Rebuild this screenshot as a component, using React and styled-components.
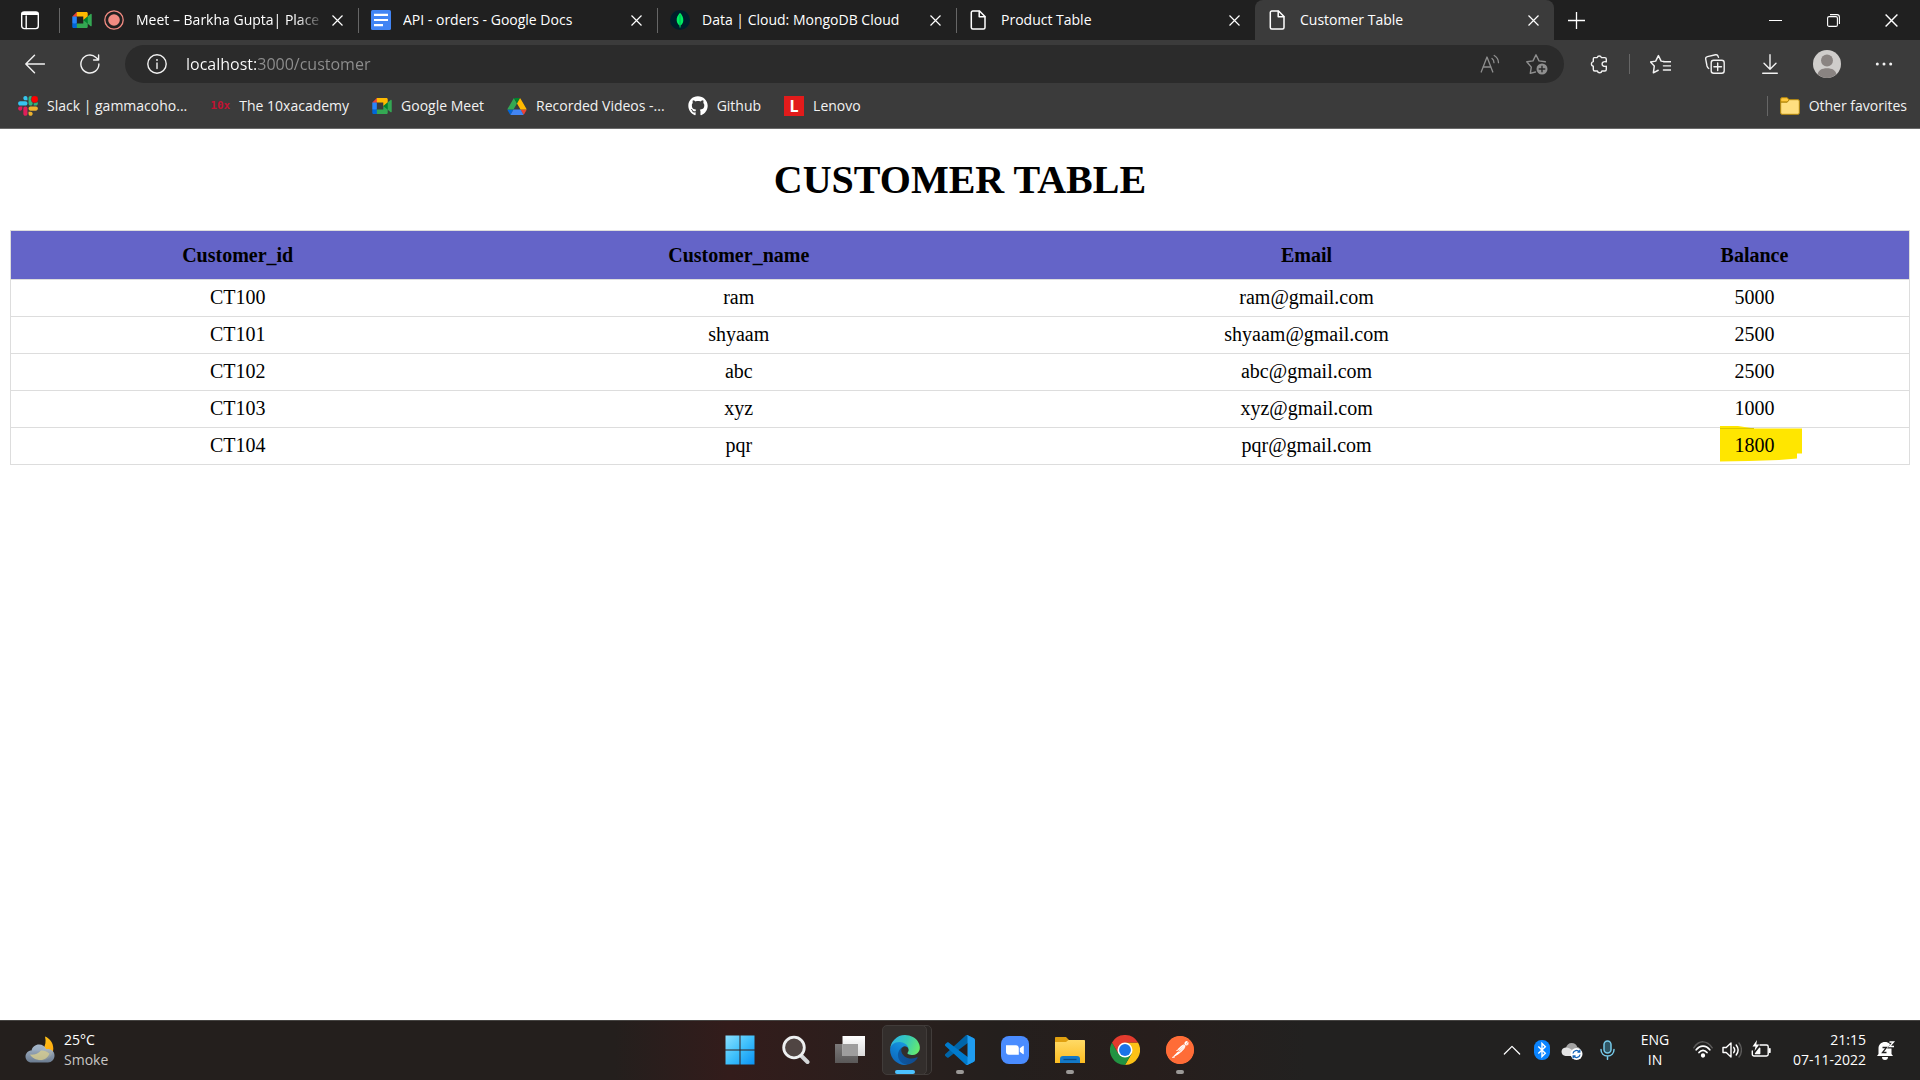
import React from "react";
import styled, { createGlobalStyle, css } from "styled-components";
import { FaGithub } from "react-icons/fa";
import { SiPostman } from "react-icons/si";

const ui = `"Segoe UI", "Open Sans", "Noto Sans", sans-serif`;

const GlobalStyle = createGlobalStyle`
  *, *::before, *::after { box-sizing: border-box; }
  body { margin: 0; background: #fff; font-family: ${ui}; }
  button { font: inherit; color: inherit; background: none; border: 0; padding: 0; cursor: default; }
  svg { display: block; flex: none; }
`;

const Shell = styled.div`
  display: flex;
  flex-direction: column;
  min-height: 100vh;
`;

/* ---------- browser chrome ---------- */

const TabBar = styled.div`
  display: flex;
  height: 40px;
  background: #202020;
  color: #fff;
`;

const ChromeButton = styled.button`
  display: flex;
  align-items: center;
  justify-content: center;
  flex: none;
  width: ${(p) => p.$width}px;
`;

const TabList = styled.div`
  display: flex;
  flex: 0 1 1495px;
  min-width: 0;
`;

const Tab = styled.div`
  position: relative;
  display: flex;
  align-items: center;
  gap: 12px;
  flex: 1 1 0;
  min-width: 0;
  padding: 0 11px 0 13px;
  font-size: 14px;
  line-height: 20px;
  ${(p) =>
    p.$active
      ? css`
          background: #3b3b3b;
          border-radius: 8px 8px 0 0;
        `
      : css`
          &::before {
            content: "";
            position: absolute;
            left: 0;
            top: 8px;
            bottom: 7px;
            width: 1px;
            background: #666;
          }
        `}
`;

const TabTitle = styled.span`
  flex: 1;
  min-width: 0;
  overflow: hidden;
  white-space: nowrap;
  ${(p) => p.$fade && css`mask-image: linear-gradient(90deg, #000 85%, transparent);`}
`;

const CloseTab = styled.button`
  display: grid;
  place-items: center;
  flex: none;
  width: 20px;
  height: 20px;
  margin-left: -10px;
`;

const WindowButtons = styled.div`
  display: flex;
  margin-left: auto;
`;

const Toolbar = styled.div`
  display: flex;
  align-items: center;
  gap: 15px;
  height: 47px;
  padding: 5px 16px 4px 15px;
  background: #3b3b3b;
  color: #f2f2f2;
`;

const ToolButton = styled.button`
  display: flex;
  align-items: center;
  justify-content: center;
  flex: none;
  width: ${(p) => (p.$wide ? 44 : 40)}px;
  height: 38px;
`;

const Divider = styled.span`
  flex: none;
  width: 1px;
  height: 20px;
  background: #666;
`;

const ToolDivider = styled(Divider)`
  margin: 0 -5px;
`;

const AddressBar = styled.label`
  display: flex;
  align-items: center;
  flex: 1;
  min-width: 0;
  height: 38px;
  padding: 0 7px 0 22px;
  gap: 19px;
  border-radius: 19px;
  background: #2b2b2b;
`;

const AddressInput = styled.input`
  flex: 1;
  min-width: 0;
  padding: 0;
  border: 0;
  outline: 0;
  font-family: ${ui};
  font-size: 16px;
  line-height: 24px;
  color: #9a9a9a;
  background: linear-gradient(90deg, #fff 70px, #8f8f8f 70px);
  -webkit-background-clip: text;
  background-clip: text;
  -webkit-text-fill-color: transparent;
`;

const AddressActions = styled.div`
  display: flex;
  gap: 7px;
  color: #8f8f8f;
`;

const Bookmarks = styled.nav`
  display: flex;
  align-items: center;
  gap: 23px;
  height: 42px;
  padding: 0 13px 3px 18px;
  border-bottom: 1px solid #6a6a6a;
  background: #3b3b3b;
  color: #f2f2f2;
`;

const Bookmark = styled.a`
  display: flex;
  align-items: center;
  gap: 9px;
  color: inherit;
  text-decoration: none;
  font-size: 14px;
  line-height: 20px;
  white-space: nowrap;
`;

const OtherFavorites = styled.div`
  display: flex;
  align-items: center;
  gap: 12px;
  margin-left: auto;
`;

const LetterIcon = styled.span`
  display: grid;
  place-items: center;
  width: 20px;
  height: 20px;
  font-family: ${(p) => (p.$slab ? `"DejaVu Sans Mono"` : `"Open Sans"`)}, sans-serif;
  font-weight: 700;
  font-size: ${(p) => (p.$slab ? 11 : 16)}px;
  line-height: 20px;
  color: ${(p) => (p.$slab ? "#c01232" : "#fff")};
  background: ${(p) => (p.$slab ? "transparent" : "#e21b1b")};
`;

/* ---------- page ---------- */

const Page = styled.main`
  flex: 1;
  padding: 28px 10px;
  background: #fff;
  color: #000;
  font-family: "Times New Roman", "Liberation Serif", serif;
  font-size: 20px;
`;

const Title = styled.h1`
  margin: 0 0 27px;
  font-size: 40px;
  line-height: 46px;
  text-align: center;
`;

const Table = styled.table`
  width: 100%;
  border: 1px solid #ddd;
  border-collapse: collapse;
  line-height: 24px;
  text-align: center;
`;

const Column = styled.col`
  width: ${(p) => p.$share}%;
`;

const HeadRow = styled.tr`
  background: #6464c8;
`;

const Row = styled.tr`
  border-top: 1px solid #ddd;
`;

const HeadCell = styled.th`
  padding: 12px 20px;
`;

const Cell = styled.td`
  padding: 5px 20px 7px;
`;

const Marked = styled.span`
  position: relative;
  isolation: isolate;
`;

const Marker = styled.svg`
  position: absolute;
  z-index: -1;
  left: -14px;
  top: -8px;
`;

/* ---------- taskbar ---------- */

const Taskbar = styled.footer`
  display: grid;
  grid-template-columns: 1fr auto 1fr;
  height: 60px;
  padding-bottom: 2px;
  border-top: 1px solid #454341;
  background: linear-gradient(90deg, #241f1d 0, #241f1d 32%, #331c1b 38%, #2a1f1d 46%, #241f1d 52%, #271e1c 60%, #222120 68%, #222120 100%);
  color: #fff;
  font-size: 14px;
  line-height: 20px;
`;

const Weather = styled.button`
  display: flex;
  align-items: center;
  justify-self: start;
  gap: 9px;
  padding-left: 25px;
  text-align: left;
`;

const Lines = styled.span`
  display: flex;
  flex-direction: column;
  text-align: ${(p) => p.$align || "left"};
`;

const Muted = styled.span`
  color: #c8c6c5;
`;

const Apps = styled.div`
  display: flex;
`;

const AppButton = styled.button`
  position: relative;
  display: flex;
  align-items: center;
  justify-content: center;
  width: 55px;
  ${(p) =>
    p.$running &&
    css`
      &::after {
        content: "";
        position: absolute;
        left: 50%;
        bottom: 4px;
        width: 8px;
        height: 4px;
        margin-left: -4px;
        border-radius: 2px;
        background: #9b9997;
      }
    `}
  ${(p) =>
    p.$current &&
    css`
      &::after {
        width: 20px;
        margin-left: -10px;
        background: #4cc2ff;
      }
    `}
`;

const Plate = styled.span`
  position: absolute;
  inset: 4px 2px 3px ${(p) => (p.$back ? 12 : 4)}px;
  right: ${(p) => (p.$back ? 1 : 6)}px;
  border: 1px solid #413c3a;
  border-radius: 5px;
  background: ${(p) => (p.$back ? "#2a2523" : "#332e2c")};
`;

const Above = styled.span`
  position: relative;
`;

const Tray = styled.div`
  display: flex;
  justify-self: end;
  padding-right: 24px;
`;

const TrayButton = styled.button`
  display: flex;
  align-items: center;
  justify-content: center;
  gap: 9px;
  width: ${(p) => p.$width}px;
`;

const Clock = styled.button`
  display: flex;
  align-items: center;
  justify-content: flex-end;
  gap: 10px;
  width: 115px;
`;

/* ---------- icons ---------- */

const Line = ({ size = 20, w = 1.4, children, ...rest }) => (
  <svg width={size} height={size} viewBox="0 0 20 20" fill="none" stroke="currentColor" strokeWidth={w} strokeLinecap="round" strokeLinejoin="round" aria-hidden="true" {...rest}>
    {children}
  </svg>
);

const WorkspaceIcon = () => (
  <Line>
    <rect x="1.700" y="2" width="16.600" height="16.600" rx="2.500" />
    <path d="M2 4.400h16M6.200 6v12.500" />
    <path d="M3 3.600h14" strokeWidth="3" />
  </Line>
);
const CrossIcon = ({ size = 11 }) => (
  <svg width={size} height={size} viewBox="0 0 11 11" stroke="currentColor" strokeWidth="1.200" aria-hidden="true"><path d="M.5 .5l10 10M10.500 .5l-10 10" /></svg>
);
const MeetIcon = () => (
  <svg width="20" height="16" viewBox="0 0 87.5 72" aria-hidden="true">
    <path fill="#00832d" d="M49.500 36l8.530 9.750 11.470 7.330 2-17.020-2-16.640-11.690 6.440z" />
    <path fill="#0066da" d="M0 51.500V66c0 3.315 2.685 6 6 6h14.500l3-10.960-3-9.540-9.950-3z" />
    <path fill="#e94235" d="M20.500 0L0 20.500l10.550 3 9.950-3 2.950-9.410z" />
    <path fill="#2684fc" d="M20.500 20.500H0v31h20.500z" />
    <path fill="#34a853" d="M82.600 8.680L69.500 19.420v33.660l13.160 10.790c1.970 1.540 4.850.135 4.850-2.370V11c0-2.535-2.945-3.925-4.910-2.320zM49.500 36v15.500h-29V72h43c3.315 0 6-2.685 6-6V53.080z" />
    <path fill="#ffba00" d="M63.500 0h-43v20.500h29V36l20-16.570V6c0-3.315-2.685-6-6-6z" />
  </svg>
);
const RecordIcon = () => (
  <svg width="20" height="20" viewBox="0 0 20 20" aria-hidden="true">
    <circle cx="10" cy="10" r="9.200" fill="none" stroke="#f28b82" strokeWidth="1.300" />
    <circle cx="10" cy="10" r="5.800" fill="#f28b82" />
  </svg>
);
const DocsIcon = () => (
  <svg width="20" height="20" viewBox="0 0 20 20" aria-hidden="true">
    <rect width="20" height="20" rx="1.500" fill="#4285f4" />
    <path d="M3 4.800h14M3 10h14M3 15.200h9" stroke="#fff" strokeWidth="2.200" />
  </svg>
);
const MongoIcon = () => (
  <svg width="20" height="20" viewBox="0 0 20 20" aria-hidden="true">
    <circle cx="10" cy="10" r="10" fill="#001e2b" />
    <path d="M10 2.800C7.600 5.400 6.500 7.800 6.700 10.500c.2 2.400 1.500 4 2.900 5.100l.2 1.900h.5l.2-1.900c1.500-1.200 2.700-2.800 2.800-5.200C13.500 7.700 12.300 5.300 10 2.800z" fill="#00ed64" />
    <path d="M10 5v12.500" stroke="#00a548" strokeWidth=".7" />
  </svg>
);
const PageIcon = () => (
  <Line w="1.500">
    <path d="M3.800 1h6.700L16 6.500v11c0 .9-.6 1.500-1.500 1.500H3.800c-.9 0-1.500-.6-1.500-1.500v-15C2.300 1.600 2.900 1 3.800 1z" />
    <path d="M10.200 1.200v5.500h5.600" />
  </Line>
);
const BackIcon = () => <Line><path d="M.8 10h18.700M9.500 1.200L.8 10l8.700 8.800" /></Line>;
const ReloadIcon = () => <Line><path d="M18.900 10A9 9 0 1 1 16 3.400l2.300 2.200M18.600 1v5h-5" /></Line>;
const InfoIcon = () => (
  <Line color="#f2f2f2"><circle cx="10" cy="10" r="9.200" /><path d="M10 9v5.500" /><path d="M10 5.900v.2" strokeWidth="1.800" /></Line>
);
const ReadIcon = () => (
  <Line w="1.300"><path d="M1.200 18L7 3l5.800 15M3 13h8M12 4.500c1.300 1 2 2.500 2 4.200M14.200 1.500c2.500 1.500 4.200 4.200 4.300 7.200" /></Line>
);
const AddStarIcon = () => (
  <Line size={22} viewBox="0 0 22 22" w="1.400">
    <path d="M9.500 19l-5.200 1.400 1-6.300L.8 8.800l6.200-.9L10 1.800l3 6.100 6.300.9" />
    <circle cx="16" cy="16" r="5.500" fill="currentColor" stroke="none" />
    <path d="M16 13.200v5.600M13.200 16h5.600" stroke="#2b2b2b" />
  </Line>
);
const PuzzleIcon = () => (
  <Line><path d="M5.200 3.600h3a2.200 2.200 0 0 1 4.200 0h3.400c.9 0 1.500.6 1.500 1.500v2.800c-3-.8-4.200.6-4.200 2.100s1.200 2.900 4.200 2.100v3.400c0 .9-.6 1.500-1.500 1.500h-2.900a2.300 2.300 0 0 1-4.500 0H5.800c-.9 0-1.500-.6-1.500-1.500v-3.200a2.400 2.400 0 0 1 0-4.700V5.100c0-.9.4-1.500.9-1.500z" /></Line>
);
const FavoritesIcon = () => (
  <Line size={21}><path d="M13.300 7.200l-2.700-.4L8 1.500 5.400 6.800l-5 .8 3.700 3.800-.9 6.500 4.600-2.400M12.800 7.300H20M12.800 11.300H20M12.800 15.300H20" /></Line>
);
const CollectionsIcon = () => (
  <Line><rect x="6.200" y="6.300" width="13" height="13" rx="2.500" /><path d="M12.700 9v7.600M8.900 12.800h7.600M3.700 14.500C2.800 14 2.300 13 2 12L.7 5.200C.4 3.900 1.100 3 2.400 2.600L10.500.8c1.300-.3 2.300.4 2.700 1.700l.3.900" /></Line>
);
const DownloadIcon = () => <Line><path d="M10 .8v14M4 9.200l6 6 6-6M2.700 19.300h14.600" /></Line>;
const Avatar = () => (
  <svg width="28" height="28" viewBox="0 0 28 28" aria-hidden="true">
    <circle cx="14" cy="14" r="14" fill="#cfcdcb" /><circle cx="14" cy="10.500" r="6" fill="#8a8482" />
    <path d="M4.600 24.300C5.200 20.300 8.800 18.200 14 18.200s8.800 2.100 9.400 6.100A14 14 0 0 1 4.600 24.300z" fill="#8a8482" />
  </svg>
);
const DotsIcon = () => <svg width="18" height="4" viewBox="0 0 18 4" fill="currentColor" aria-hidden="true"><circle cx="2.300" cy="2" r="1.500" /><circle cx="9" cy="2" r="1.500" /><circle cx="15.700" cy="2" r="1.500" /></svg>;
const PlusIcon = () => <svg width="17" height="17" viewBox="0 0 17 17" stroke="currentColor" strokeWidth="1.300" aria-hidden="true"><path d="M8.500 0v17M0 8.500h17" /></svg>;
const MinimizeIcon = () => <svg width="13" height="13" viewBox="0 0 13 13" stroke="currentColor" aria-hidden="true"><path d="M0 6.500h13" /></svg>;
const RestoreIcon = () => <svg width="13" height="13" viewBox="0 0 13 13" fill="none" stroke="currentColor" strokeWidth="1.100" aria-hidden="true"><rect x=".6" y="2.600" width="9.800" height="9.800" rx="1.500" /><path d="M3 .6h7c1.400 0 2.400 1 2.400 2.400v7" /></svg>;

const SlackIcon = () => (
  <svg width="20" height="20" viewBox="0 0 127 127" aria-hidden="true">
    <path fill="#e01e5a" d="M27.200 80c0 7.300-5.900 13.200-13.200 13.200C6.700 93.200.8 87.300.8 80c0-7.300 5.900-13.200 13.200-13.200h13.200V80zm6.600 0c0-7.300 5.900-13.200 13.200-13.200 7.300 0 13.200 5.900 13.200 13.200v33c0 7.300-5.900 13.200-13.200 13.200-7.300 0-13.200-5.900-13.200-13.200V80z" />
    <path fill="#36c5f0" d="M47 27c-7.300 0-13.200-5.900-13.200-13.200C33.800 6.500 39.700.6 47 .6c7.300 0 13.200 5.900 13.200 13.200V27H47zm0 6.700c7.300 0 13.200 5.900 13.200 13.200 0 7.300-5.900 13.200-13.200 13.200H13.900C6.600 60.100.7 54.200.7 46.900c0-7.300 5.900-13.200 13.200-13.200H47z" />
    <path fill="#2eb67d" d="M99.900 46.900c0-7.300 5.900-13.200 13.200-13.200 7.300 0 13.200 5.900 13.200 13.200 0 7.300-5.900 13.200-13.200 13.200H99.900V46.900zm-6.600 0c0 7.300-5.900 13.200-13.200 13.200-7.300 0-13.200-5.900-13.200-13.200V13.800C66.900 6.500 72.800.6 80.100.6c7.300 0 13.200 5.900 13.200 13.200v33.100z" />
    <path fill="#ecb22e" d="M80.100 99.800c7.300 0 13.200 5.900 13.200 13.200 0 7.300-5.900 13.200-13.200 13.200-7.300 0-13.200-5.900-13.200-13.200V99.800h13.200zm0-6.600c-7.300 0-13.200-5.900-13.200-13.200 0-7.300 5.900-13.200 13.200-13.200h33.100c7.300 0 13.200 5.900 13.200 13.200 0 7.300-5.900 13.200-13.200 13.200H80.100z" />
    <circle cx="106" cy="21" r="23" fill="#f00" stroke="#3b3b3b" strokeWidth="3" />
  </svg>
);
const DriveIcon = () => (
  <svg width="20" height="17" viewBox="0 0 87.3 78" aria-hidden="true">
    <path fill="#0066da" d="M6.600 66.850l3.850 6.650c.8 1.400 1.950 2.500 3.300 3.300L27.500 53H0c0 1.550.4 3.100 1.200 4.500z" />
    <path fill="#34a853" d="M43.650 25L29.900 1.200c-1.350.8-2.500 1.900-3.300 3.300l-25.400 44A9.060 9.060 0 0 0 0 53h27.500z" />
    <path fill="#ea4335" d="M73.550 76.800c1.350-.8 2.500-1.900 3.300-3.300l1.600-2.750 7.650-13.250c.8-1.400 1.200-2.950 1.200-4.500H59.798l5.852 11.500z" />
    <path fill="#00832d" d="M43.650 25L57.400 1.200C56.050.4 54.500 0 52.900 0H34.400c-1.600 0-3.150.45-4.500 1.200z" />
    <path fill="#4285f4" d="M59.800 53H27.500L13.750 76.800c1.350.8 2.900 1.200 4.500 1.200h50.800c1.600 0 3.150-.45 4.500-1.200z" />
    <path fill="#ffba00" d="M73.400 26.500l-12.700-22c-.8-1.400-1.950-2.500-3.300-3.300L43.650 25 59.800 53h27.450c0-1.550-.4-3.100-1.200-4.500z" />
  </svg>
);
const FolderIcon = () => (
  <svg width="20" height="18" viewBox="0 0 20 18" aria-hidden="true">
    <path d="M.7 3V2C.7 1.200 1.200.7 2 .7h5.200L9 2.700 7.500 5H.7z" fill="#ffc83d" stroke="#b98a0a" />
    <path d="M.7 5.200h6.500L9.300 2.700H18c.8 0 1.300.5 1.300 1.300v12c0 .8-.5 1.300-1.300 1.300H2c-.8 0-1.300-.5-1.300-1.300z" fill="#ffdf80" stroke="#b98a0a" />
  </svg>
);

const WeatherIcon = () => (
  <svg width="30" height="28" viewBox="0 0 30 28" aria-hidden="true">
    <defs>
      <linearGradient id="cloud" x1="0" y1="0" x2="0" y2="1"><stop offset="0" stopColor="#b4c6da" /><stop offset="1" stopColor="#718399" /></linearGradient>
      <linearGradient id="moon" x1="0" y1="0" x2="1" y2="1"><stop offset="0" stopColor="#ffd21f" /><stop offset="1" stopColor="#ff9f0a" /></linearGradient>
    </defs>
    <path d="M20 .5c5 2 8.300 6.500 8.300 12 0 7-5 12-12 12-5 0-9-2.700-11-6.500 10 2 17.500-7 14.700-17.500z" fill="url(#moon)" />
    <path d="M6.500 14.500C7.300 11 10.300 8.500 14 8.500c3.300 0 6 2 7.200 4.700 4.700-.6 8.300 2.300 8.300 6.300 0 4-3 7-6.500 7H6.500C3 26.500.5 23.800.5 20.500s2.700-6 6-6z" fill="url(#cloud)" fillOpacity=".93" />
    <path d="M5 18.500c3 .8 7.800 0 11.200-4.500 2 .3 5.300 1 8.300 3.500-1.500 4-4.700 6.500-9 6.500-4.300 0-8.700-2.200-10.500-5.500z" fill="#d8ce8e" fillOpacity=".75" />
    <path d="M7 14.600c.3-2.800 3.200-5 6.500-5 4 0 6.500 2.300 7.500 5.400" fill="#9db1c8" fillOpacity=".5" />
  </svg>
);
const StartIcon = () => (
  <svg width="30" height="30" viewBox="0 0 30 30" aria-hidden="true">
    <defs><linearGradient id="win" x1="0" y1="0" x2="1" y2="1"><stop offset="0" stopColor="#8be0ff" /><stop offset=".5" stopColor="#3fc0fb" /><stop offset="1" stopColor="#0a93f5" /></linearGradient></defs>
    <path d="M.5 .5h14v14h-14zM15.500 .5h14v14h-14zM.5 15.500h14v14h-14zM15.500 15.500h14v14h-14z" fill="url(#win)" />
  </svg>
);
const SearchIcon = () => (
  <svg width="30" height="30" viewBox="0 0 30 30" aria-hidden="true">
    <path d="M20.500 20l7 7" stroke="#d4d6d8" strokeWidth="4" strokeLinecap="round" />
    <circle cx="14" cy="12.500" r="10.300" fill="#504543" stroke="#eef0f1" strokeWidth="2.800" />
  </svg>
);
const TaskViewIcon = () => (
  <svg width="30" height="30" viewBox="0 0 30 30" aria-hidden="true">
    <defs>
      <linearGradient id="tvA" x1="0" y1="0" x2="0" y2="1"><stop offset="0" stopColor="#fff" /><stop offset="1" stopColor="#d9d9d9" /></linearGradient>
      <linearGradient id="tvB" x1="0" y1="0" x2="0" y2="1"><stop offset="0" stopColor="#7b7979" /><stop offset="1" stopColor="#5a5858" /></linearGradient>
    </defs>
    <path d="M0 9h23v19H0z" fill="url(#tvB)" /><path d="M7.500 1H30v20H7.500z" fill="url(#tvA)" /><path d="M7.500 9H23v12H7.500z" fill="#9e9d9d" />
  </svg>
);
const EdgeIcon = () => (
  <svg width="30" height="30" viewBox="4 4 258 258" aria-hidden="true">
    <defs>
      <linearGradient id="eA" x1="0" y1=".6" x2="1" y2=".6"><stop offset="0" stopColor="#0c59a4" /><stop offset="1" stopColor="#114a8b" /></linearGradient>
      <linearGradient id="eB" x1=".8" y1="0" x2=".3" y2="1"><stop offset="0" stopColor="#1b9de2" /><stop offset=".5" stopColor="#0f7fd2" /><stop offset="1" stopColor="#1066b8" /></linearGradient>
      <linearGradient id="eC" x1="0" y1=".3" x2="1" y2=".6"><stop offset="0" stopColor="#2bb3e8" /><stop offset=".5" stopColor="#36c9b8" /><stop offset="1" stopColor="#66eb6e" /></linearGradient>
    </defs>
    <path fill="url(#eA)" d="M235.680 195.460a93.730 93.730 0 0 1-10.540 4.710 101.870 101.870 0 0 1-35.900 6.460c-47.320 0-88.540-32.550-88.540-74.320A31.480 31.480 0 0 1 117.130 105c-42.800 1.800-53.800 46.400-53.800 72.530 0 73.880 68.090 81.370 82.760 81.370 7.910 0 19.840-2.300 27-4.560l1.310-.44a128.340 128.340 0 0 0 66.600-52.800 4 4 0 0 0-5.320-5.640z" />
    <path fill="url(#eB)" d="M110.340 246.340A79.200 79.200 0 0 1 87.600 225a80.720 80.720 0 0 1 29.530-120c3.120-1.470 8.450-4.130 15.540-4a32.350 32.350 0 0 1 25.690 13 31.880 31.880 0 0 1 6.360 18.660c0-.21 24.460-79.600-80-79.600-43.900 0-80 41.660-80 78.210a130.150 130.150 0 0 0 12.110 56 128 128 0 0 0 156.380 67.110 75.550 75.550 0 0 1-62.780-8z" />
    <path fill="url(#eC)" d="M156.940 153.780c-.81 1.050-3.300 2.500-3.300 5.660 0 2.610 1.700 5.120 4.720 7.230 14.380 10 41.490 8.680 41.560 8.680a59.560 59.560 0 0 0 30.270-8.350 61.380 61.380 0 0 0 30.430-52.880c.26-22.410-8-37.310-11.340-43.910C228.090 28.760 182.350 5 132.610 5a128 128 0 0 0-128 126.200c.48-36.540 36.800-66.050 80-66.050 3.500 0 23.460.34 42 10.070 16.340 8.580 24.900 18.940 30.850 29.210 6.180 10.670 7.280 24.150 7.280 29.520s-2.740 13.330-7.800 19.830z" />
  </svg>
);
const CodeIcon = () => (
  <svg width="30" height="30" viewBox="0 0 100 100" aria-hidden="true">
    <path fill="#0065a9" d="M96.461 10.796L75.857.876C73.472-.273 70.622.212 68.750 2.083L1.299 63.583c-1.815 1.654-1.813 4.511.004 6.162l5.510 5.009c1.485 1.350 3.722 1.450 5.321.237L93.361 13.370C96.086 11.303 100 13.246 100 16.667v-.239c0-2.401-1.375-4.590-3.539-5.632z" />
    <path fill="#007acc" d="M96.461 89.204l-20.604 9.921c-2.385 1.148-5.235.664-7.107-1.208L1.299 36.417c-1.815-1.654-1.813-4.511.004-6.162l5.510-5.009c1.485-1.350 3.722-1.450 5.321-.237L93.361 86.630C96.086 88.697 100 86.754 100 83.333v.240c0 2.400-1.375 4.589-3.539 5.631z" />
    <path fill="#1f9cf0" d="M75.858 99.126c-2.386 1.148-5.236.663-7.108-1.209C71.056 100.223 75 98.590 75 95.328V4.672C75 1.410 71.056-.223 68.750 2.083 70.622.211 73.472-.274 75.858.874l20.601 9.907C98.623 11.822 100 14.011 100 16.413v67.174c0 2.402-1.377 4.592-3.541 5.633z" />
  </svg>
);
const ZoomIcon = () => (
  <svg width="28" height="28" viewBox="0 0 28 28" aria-hidden="true">
    <rect width="28" height="28" rx="8" fill="#4a8cff" />
    <path d="M5 9.300h10c1.600 0 2.800 1.200 2.800 2.800v6.600h-10C6.200 18.700 5 17.500 5 15.900zM18.800 12.300l3-2.200c.6-.4 1-.3 1 .4v7c0 .7-.4.8-1 .4l-3-2.200z" fill="#fff" />
  </svg>
);
const ExplorerIcon = () => (
  <svg width="30" height="28" viewBox="0 0 30 28" aria-hidden="true">
    <defs><linearGradient id="fo" x1="0" y1="0" x2="0" y2="1"><stop offset="0" stopColor="#ffda66" /><stop offset="1" stopColor="#fcbc21" /></linearGradient></defs>
    <path d="M0 8V2C0 1.400.5 1 1 1h10l3 3v4z" fill="#e0a010" />
    <path d="M0 6h11l2.500-2H29c.6 0 1 .4 1 1v22H0z" fill="url(#fo)" />
    <path d="M5 27v-4c0-2 1-3 3-3h14c2 0 3 1 3 3v4z" fill="#1379c8" /><path d="M8.500 23.500h13" stroke="#0a4b85" strokeWidth="1.300" />
  </svg>
);
const ChromeIcon = () => (
  <svg width="30" height="30" viewBox="0 0 48 48" aria-hidden="true">
    <path d="M24 12h20.800A24 24 0 0 1 24 48l10.400-18z" fill="#fbc116" />
    <path d="M3.200 12A24 24 0 0 0 24 48l10.400-18L24 24l-10.400 6z" fill="#229342" />
    <path d="M3.200 12l10.400 18L24 12H44.800A24 24 0 0 0 3.200 12z" fill="#e33b2e" />
    <circle cx="24" cy="24" r="12" fill="#fff" /><circle cx="24" cy="24" r="9.500" fill="#1a73e8" />
  </svg>
);
const PostmanBadge = styled(SiPostman)`
  width: 28px;
  height: 28px;
  border-radius: 50%;
  color: #ff6c37;
  background: radial-gradient(circle, #fff 60%, #ff6c37 62%);
`;

const ChevronIcon = () => <Line size={18}><path d="M1.500 14.500L10 6l8.500 8.500" /></Line>;
const BluetoothIcon = () => (
  <svg width="16" height="20" viewBox="0 0 16 20" aria-hidden="true">
    <rect width="16" height="20" rx="7.500" fill="#0a84ff" />
    <path d="M4.300 6.500l7 6.800L8 16.500v-13l3.300 3.200-7 6.800" fill="none" stroke="#fff" strokeWidth="1.400" />
  </svg>
);
const CloudSyncIcon = () => (
  <svg width="22" height="20" viewBox="0 0 22 20" aria-hidden="true">
    <path d="M5 8c.4-3 2.800-5 5.700-5C13.300 3 15.500 4.500 16.300 7c2 .5 3.500 2 3.500 4.500L16 16H5z" fill="#a3a3a3" />
    <path d="M4.500 7.500c2-.3 4.500.5 6.500 2.500l5 6H4.500C2.300 16 .5 14 .5 11.800.5 9.500 2.200 7.700 4.500 7.500z" fill="#e4e4e4" />
    <circle cx="15.500" cy="14" r="6" fill="#fff" />
    <path d="M12 13.500a3.600 3.600 0 0 1 6.400-1.700M19 14.500a3.600 3.600 0 0 1-6.400 1.700M18.800 9.800v2.400h-2.400M12.200 18.200v-2.400h2.400" fill="none" stroke="#1565b8" strokeWidth="1.300" />
  </svg>
);
const MicIcon = () => (
  <svg width="15" height="20" viewBox="0 0 15 20" fill="none" stroke="#76c9e8" strokeWidth="1.500" strokeLinecap="round" aria-hidden="true">
    <rect x="4" y="1" width="7" height="12" rx="3.500" fill="#2f5563" /><path d="M1 9.500c0 4 2.700 6.500 6.500 6.500S14 13.500 14 9.500M7.500 16v3.300" />
  </svg>
);
const WifiIcon = () => (
  <Line w="1.700"><path d="M.8 7.800C6-.2 14 0 19.200 7.800" stroke="#5c5b5a" strokeWidth="1.500" /><path d="M3.200 9.800c3.800-5 9.800-5 13.600 0M6 12.600c2.300-3 5.700-3 8 0" /><circle cx="10" cy="15.500" r="1.300" fill="currentColor" /></Line>
);
const VolumeIcon = () => (
  <Line><path d="M1 7.500h3.200L9 3v14l-4.800-4.500H1z" /><path d="M11.700 7.300c1.200 1.600 1.200 3.800 0 5.400M14.200 5c2.300 3 2.300 7 0 10" /><path d="M17 3c3.200 4 3.200 10 0 14" stroke="#5c5b5a" /></Line>
);
const BatteryIcon = () => (
  <Line><path d="M9 5h6.500c1 0 1.700.7 1.700 1.700v7.600c0 1-.7 1.700-1.700 1.700H3c-1 0-1.700-.7-1.700-1.700V11" /><path d="M18.800 8.800v3.400" strokeWidth="1.800" /><path d="M4.500 13.500h4.200V8.200L5 13z" fill="currentColor" /><path d="M6 0L1.500 6.500h3L3.500 11 8.300 4.500h-3z" fill="currentColor" stroke="none" /></Line>
);
const BellIcon = () => (
  <svg width="20" height="20" viewBox="0 0 20 20" aria-hidden="true">
    <path d="M2.500 14V8.500C2.500 4.500 5.300 2 9 2s6.500 2.500 6.500 6.500V14l1.500 2H1zM6 17h6a3 3 0 0 1-6 0z" fill="#fff" />
    <path d="M6.500 7.500h4l-4 5h4" fill="none" stroke="#222" strokeWidth="1.300" />
    <path d="M13 1.500h5l-4 5.500h5" fill="none" stroke="#222" strokeWidth="3" />
    <path d="M13.500 2h4l-4 4.500h4.500" fill="none" stroke="#fff" strokeWidth="1.400" />
  </svg>
);

/* ---------- data ---------- */

const tabs = [
  { title: "Meet – Barkha Gupta| Place", icons: [MeetIcon, RecordIcon], fade: true },
  { title: "API - orders - Google Docs", icons: [DocsIcon] },
  { title: "Data | Cloud: MongoDB Cloud", icons: [MongoIcon] },
  { title: "Product Table", icons: [PageIcon] },
  { title: "Customer Table", icons: [PageIcon], active: true },
];

const bookmarks = [
  ["Slack | gammacoho...", <SlackIcon />],
  ["The 10xacademy", <LetterIcon $slab>10x</LetterIcon>],
  ["Google Meet", <MeetIcon />],
  ["Recorded Videos -...", <DriveIcon />],
  ["Github", <FaGithub size={20} color="#fff" />],
  ["Lenovo", <LetterIcon>L</LetterIcon>],
];

const columns = [
  { name: "Customer_id", share: 23.9 },
  { name: "Customer_name", share: 28.9 },
  { name: "Email", share: 30.9 },
  { name: "Balance", share: 16.3 },
];
const customers = [
  ["CT100", "ram", "ram@gmail.com", 5000],
  ["CT101", "shyaam", "shyaam@gmail.com", 2500],
  ["CT102", "abc", "abc@gmail.com", 2500],
  ["CT103", "xyz", "xyz@gmail.com", 1000],
  ["CT104", "pqr", "pqr@gmail.com", 1800],
];

const apps = [
  { name: "Start", icon: <StartIcon /> },
  { name: "Search", icon: <SearchIcon /> },
  { name: "Task View", icon: <TaskViewIcon /> },
  { name: "Microsoft Edge", icon: <EdgeIcon />, running: true, current: true },
  { name: "Visual Studio Code", icon: <CodeIcon />, running: true },
  { name: "Zoom", icon: <ZoomIcon /> },
  { name: "File Explorer", icon: <ExplorerIcon />, running: true },
  { name: "Google Chrome", icon: <ChromeIcon /> },
  { name: "Postman", icon: <PostmanBadge />, running: true },
];

function Highlight({ children }) {
  return (
    <Marked>
      <Marker width="82" height="36" viewBox="0 0 82 36" aria-hidden="true">
        <path d="M0 0h18l16 2.500h48v25h-5v5l-18 1.500-30 1L0 35.500z" fill="#ffe600" />
        <path d="M0 2.500h34" stroke="#dcc700" />
      </Marker>
      {children}
    </Marked>
  );
}

export default function App() {
  return (
    <Shell>
      <GlobalStyle />
      <header>
        <TabBar>
          <ChromeButton $width={59} aria-label="Tab actions"><WorkspaceIcon /></ChromeButton>
          <TabList>
            {tabs.map(({ title, icons, active, fade }) => (
              <Tab key={title} $active={active}>
                {icons.map((Icon, i) => <Icon key={i} />)}
                <TabTitle $fade={fade}>{title}</TabTitle>
                <CloseTab aria-label={`Close ${title}`}><CrossIcon /></CloseTab>
              </Tab>
            ))}
          </TabList>
          <ChromeButton $width={44} aria-label="New tab"><PlusIcon /></ChromeButton>
          <WindowButtons>
            <ChromeButton $width={58} aria-label="Minimize"><MinimizeIcon /></ChromeButton>
            <ChromeButton $width={58} aria-label="Restore"><RestoreIcon /></ChromeButton>
            <ChromeButton $width={58} aria-label="Close window"><CrossIcon size={13} /></ChromeButton>
          </WindowButtons>
        </TabBar>
        <Toolbar>
          <ToolButton aria-label="Back"><BackIcon /></ToolButton>
          <ToolButton aria-label="Refresh"><ReloadIcon /></ToolButton>
          <AddressBar>
            <InfoIcon />
            <AddressInput type="text" aria-label="Address" defaultValue="localhost:3000/customer" spellCheck={false} />
            <AddressActions>
              <ToolButton aria-label="Read aloud"><ReadIcon /></ToolButton>
              <ToolButton aria-label="Add to favorites"><AddStarIcon /></ToolButton>
            </AddressActions>
          </AddressBar>
          <ToolButton aria-label="Extensions"><PuzzleIcon /></ToolButton>
          <ToolDivider />
          <ToolButton aria-label="Favorites"><FavoritesIcon /></ToolButton>
          <ToolButton aria-label="Collections"><CollectionsIcon /></ToolButton>
          <ToolButton aria-label="Downloads"><DownloadIcon /></ToolButton>
          <ToolButton $wide aria-label="Profile"><Avatar /></ToolButton>
          <ToolButton aria-label="Settings and more"><DotsIcon /></ToolButton>
        </Toolbar>
        <Bookmarks>
          {bookmarks.map(([name, icon]) => (
            <Bookmark key={name} href="#">{icon}<span>{name}</span></Bookmark>
          ))}
          <OtherFavorites>
            <Divider />
            <Bookmark href="#"><FolderIcon /><span>Other favorites</span></Bookmark>
          </OtherFavorites>
        </Bookmarks>
      </header>

      <Page>
        <Title>CUSTOMER TABLE</Title>
        <Table>
          <colgroup>
            {columns.map(({ name, share }) => <Column key={name} $share={share} />)}
          </colgroup>
          <thead>
            <HeadRow>{columns.map(({ name }) => <HeadCell key={name} scope="col">{name}</HeadCell>)}</HeadRow>
          </thead>
          <tbody>
            {customers.map(([id, name, email, balance]) => (
              <Row key={id}>
                <Cell>{id}</Cell>
                <Cell>{name}</Cell>
                <Cell>{email}</Cell>
                <Cell>{balance === 1800 ? <Highlight>{balance}</Highlight> : balance}</Cell>
              </Row>
            ))}
          </tbody>
        </Table>
      </Page>

      <Taskbar>
        <Weather>
          <WeatherIcon />
          <Lines><span>25°C</span><Muted>Smoke</Muted></Lines>
        </Weather>
        <Apps>
          {apps.map(({ name, icon, running, current }) => (
            <AppButton key={name} aria-label={name} $running={running} $current={current}>
              {current && <><Plate $back /><Plate /></>}
              <Above>{icon}</Above>
            </AppButton>
          ))}
        </Apps>
        <Tray>
          <TrayButton $width={30} aria-label="Show hidden icons"><ChevronIcon /></TrayButton>
          <TrayButton $width={30} aria-label="Bluetooth"><BluetoothIcon /></TrayButton>
          <TrayButton $width={30} aria-label="OneDrive"><CloudSyncIcon /></TrayButton>
          <TrayButton $width={40} aria-label="Microphone"><MicIcon /></TrayButton>
          <TrayButton $width={56}><Lines $align="center"><span>ENG</span><span>IN</span></Lines></TrayButton>
          <TrayButton $width={98} aria-label="Network, volume and battery"><WifiIcon /><VolumeIcon /><BatteryIcon /></TrayButton>
          <Clock><Lines $align="right"><span>21:15</span><span>07-11-2022</span></Lines><BellIcon /></Clock>
        </Tray>
      </Taskbar>
    </Shell>
  );
}
